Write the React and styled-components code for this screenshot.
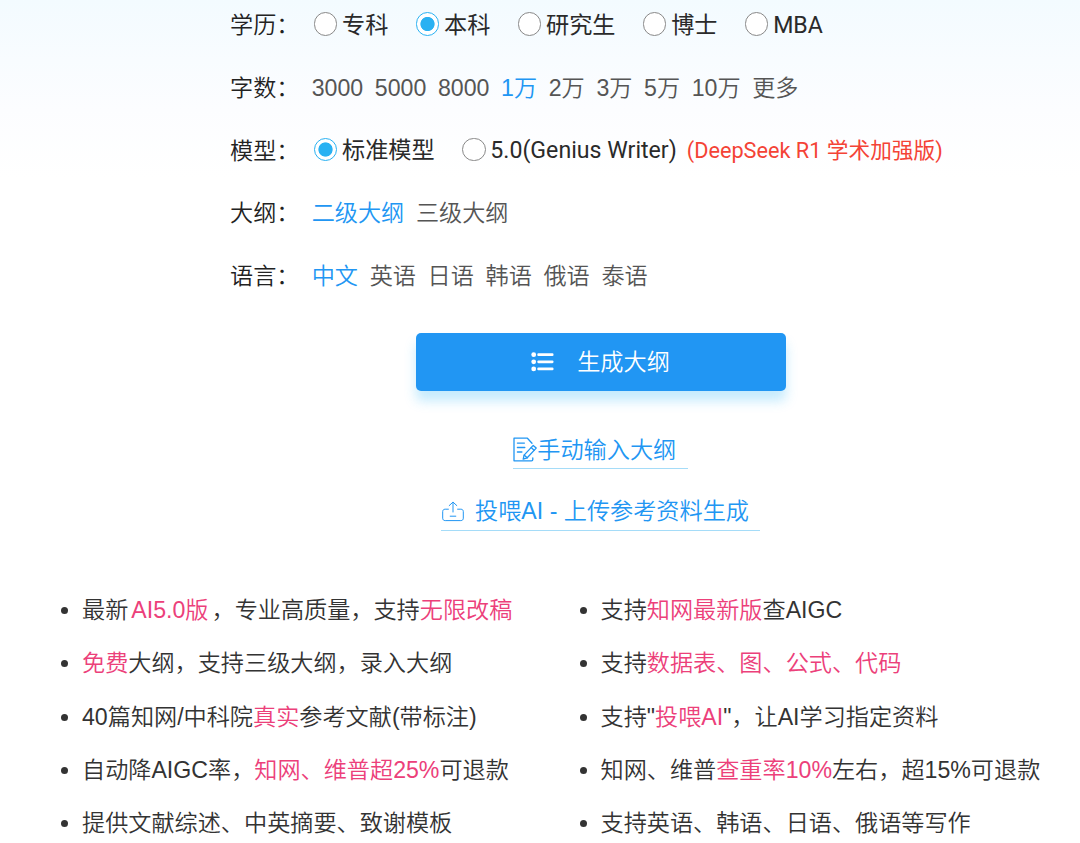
import styled, { createGlobalStyle } from "styled-components"
import { useState } from "react"

const words = ["3000", "5000", "8000", "1万", "2万", "3万", "5万", "10万", "更多"];
const outlines = ["二级大纲", "三级大纲"];
const languages = ["中文", "英语", "日语", "韩语", "俄语", "泰语"];
const degrees = ["专科", "本科", "研究生", "博士", "MBA"];
const models = ["标准模型", "5.0(Genius Writer)"];

export default function App() {

  const [degree, setDegree] = useState("本科");
  const [count, setCount] = useState("1万");
  const [model, setModel] = useState("标准模型");
  const [outline, setOutline] = useState("二级大纲");
  const [language, setLanguage] = useState("中文");

  return (
    <Page>
      <GlobalStyle />
      <Form>
        <Row>
          <Label>学历：</Label>
          <Radios items={degrees} value={degree} onChange={setDegree} />
        </Row>
        <Row>
          <Label>字数：</Label>
          <Options items={words} value={count} onChange={setCount} />
        </Row>
        <Row>
          <Label>模型：</Label>
          <Radios items={models} value={model} onChange={setModel} />
          <Tip>(DeepSeek R1 学术加强版)</Tip>
        </Row>
        <Row>
          <Label>大纲：</Label>
          <Options items={outlines} value={outline} onChange={setOutline} />
        </Row>
        <Row>
          <Label>语言：</Label>
          <Options items={languages} value={language} onChange={setLanguage} />
        </Row>
      </Form>

      <Actions>
        <SubmitButton>
          <ListIcon />
          生成大纲
        </SubmitButton>
        <TextLink>
          <EditIcon />
          手动输入大纲
        </TextLink>
        <UploadLink>
          <UploadIcon />
          投喂AI - 上传参考资料生成
        </UploadLink>
      </Actions>

      <Features>
        <FeatureList>
          <li>最新<Latest>AI5.0版</Latest>，专业高质量，支持<em>无限改稿</em></li>
          <li><em>免费</em>大纲，支持三级大纲，录入大纲</li>
          <li>40篇知网/中科院<em>真实</em>参考文献(带标注)</li>
          <li>自动降AIGC率，<em>知网、维普超25%</em>可退款</li>
          <li>提供文献综述、中英摘要、致谢模板</li>
        </FeatureList>
        <FeatureList>
          <li>支持<em>知网最新版</em>查AIGC</li>
          <li>支持<em>数据表、图、公式、代码</em></li>
          <li>支持"<em>投喂AI</em>"，让AI学习指定资料</li>
          <li>知网、维普<em>查重率10%</em>左右，超15%可退款</li>
          <li>支持英语、韩语、日语、俄语等写作</li>
        </FeatureList>
      </Features>
    </Page>
  )
}

function Radios({ items, value, onChange }) {
  return (
    <RadioGroup>
      {items.map(item => (
        <RadioLabel key={item} onClick={() => onChange(item)}>
          <Circle $checked={item === value} />
          {item}
        </RadioLabel>
      ))}
    </RadioGroup>
  )
}

function Options({ items, value, onChange }) {
  return (
    <OptionGroup>
      {items.map(item => (
        <Option key={item} $active={item === value} onClick={() => onChange(item)}>{item}</Option>
      ))}
    </OptionGroup>
  )
}

function ListIcon() {
  return (
    <svg width="23" height="20" viewBox="0 0 23 20" fill="#fff">
      <circle cx="2.7" cy="2.7" r="2.4" />
      <circle cx="2.7" cy="9.8" r="2.4" />
      <circle cx="2.7" cy="16.9" r="2.4" />
      <rect x="6.3" y="1.3" width="16.2" height="2.8" rx="1.1" />
      <rect x="6.3" y="8.4" width="16.2" height="2.8" rx="1.1" />
      <rect x="6.3" y="15.5" width="16.2" height="2.8" rx="1.1" />
    </svg>
  )
}

function EditIcon() {
  return (
    <svg width="24" height="25" viewBox="0 0 24 25" fill="none" stroke="#2196f3" strokeWidth="1.3" strokeLinejoin="round" strokeLinecap="round">
      <path d="M19 6.2 14.4 1.2H1v22.6h17.5c.8 0 1.3-.5 1.3-1.3V21" />
      <path d="M4.4 6.1h7M4.4 10.5h7.4M4.4 15h4.5" />
      <path d="m20.2 8.4 3 2.7-9 9.7-4 1.4.9-4.1z" />
      <path d="m18.2 10.5 2.9 2.7M11.1 18.1l3.1 2.7" />
    </svg>
  )
}

function UploadIcon() {
  return (
    <svg width="24" height="22" viewBox="0 0 24 22" fill="none" stroke="#2196f3" strokeWidth="1" strokeLinecap="round" strokeLinejoin="round">
      <path d="M7.4 8.2H4.2c-1.6 0-2.5.9-2.5 2.4v6.6c0 1.5.9 2.4 2.5 2.4h15.6c1.6 0 2.5-.9 2.5-2.4v-6.6c0-1.5-.9-2.4-2.5-2.4h-3.2" />
      <path d="M12 11V1.3M8.2 4.6 12 1.1l3.8 3.5M9.2 15.2h5.6" />
    </svg>
  )
}

const GlobalStyle = createGlobalStyle`
  body{
    margin: 0;
    background: #fff;
  }
`

const Page = styled.div`
  box-sizing: border-box;
  width: 1080px;
  height: 843px;
  overflow: hidden;
  padding-top: 5px;
  background: linear-gradient(#f3fbff 0, #f8fcff 60px, #fcfdff 110px, #fff 178px);
  font-family: "Liberation Sans", "Noto Sans CJK SC", sans-serif;
  font-size: 23.15px;
  font-weight: 350;
  white-space: nowrap;
`

const Form = styled.div`
  display: flex;
  flex-direction: column;
  gap: 22.75px;
  padding-left: 230px;
`

const Row = styled.div`
  display: flex;
  align-items: center;
  height: 40px;
  line-height: 40px;
`

const Label = styled.div`
  width: 81.7px;
  color: #222;
`

const RadioGroup = styled.div`
  display: flex;
  gap: 27.5px;
  padding-left: 2.2px;
  color: #2a2a2a;
  font-family: Roboto, "Noto Sans CJK SC", sans-serif;
  font-weight: 400;
`

const RadioLabel = styled.div`
  display: flex;
  align-items: center;
  gap: 4.7px;
  line-height: 41px;
  cursor: pointer;
`

const Circle = styled.span`
  box-sizing: border-box;
  width: 23.5px;
  height: 23.5px;
  margin-bottom: 2px;
  border: 1px solid ${props => props.$checked ? "#29b1f2" : "#888"};
  border-radius: 50%;
  background: ${props => props.$checked ? "radial-gradient(circle, #29b1f2 6.7px, #fff 7.5px)" : "#fff"};
`

const Tip = styled.span`
  margin-left: 10px;
  color: #f44336;
  font-family: Roboto, "Noto Sans CJK SC", sans-serif;
  font-size: 21.7px;
  font-weight: 400;
`

const OptionGroup = styled.div`
  display: flex;
  gap: 11.65px;
`

const Option = styled.span`
  color: ${props => props.$active ? "#2196f3" : "#555"};
  cursor: pointer;
`

const Actions = styled.div`
  display: flex;
  flex-direction: column;
  align-items: center;
  margin-top: 37px;
  padding-left: 121px;
`

const SubmitButton = styled.button`
  display: flex;
  align-items: center;
  justify-content: center;
  gap: 23px;
  width: 370.5px;
  height: 58px;
  margin-left: 1px;
  padding: 0 1px 0 0;
  border: none;
  border-radius: 5px;
  background: #2196f3;
  box-shadow: 0 10px 12px rgba(41, 182, 246, 0.27);
  color: #fff;
  font: inherit;
  line-height: 58px;
`

const TextLink = styled.a`
  display: flex;
  align-items: center;
  box-sizing: border-box;
  height: 38px;
  margin-top: 40px;
  padding-right: 11.5px;
  border-bottom: 1px solid #a5dcf8;
  color: #2196f3;
  line-height: 40px;
`

const UploadLink = styled(TextLink)`
  gap: 10.5px;
  margin-top: 24px;
  line-height: 37px;
`

const Features = styled.div`
  display: flex;
  padding-top: 53.4px;
`

const FeatureList = styled.ul`
  box-sizing: border-box;
  width: 518.5px;
  margin: 0;
  padding-left: 82px;
  color: #333;

  li{
    height: 53.1px;
    line-height: 53.1px;
  }

  em{
    color: #ec407a;
    font-style: normal;
  }
`

const Latest = styled.em`
  margin: 0 3px;
`
